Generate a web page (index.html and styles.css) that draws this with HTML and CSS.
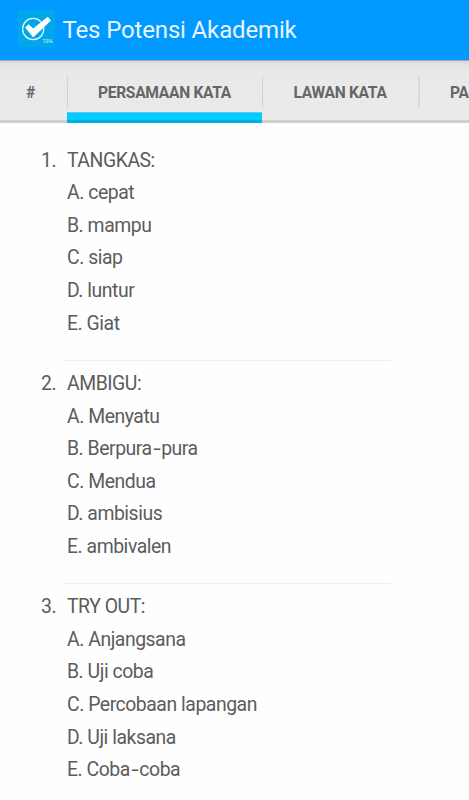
FILE: index.html
```html
<!DOCTYPE html>
<html lang="id">
<head>
<meta charset="utf-8">
<title>Tes Potensi Akademik</title>
<link rel="stylesheet" href="styles.css">
</head>
<body>
<header class="app-bar">
  <svg class="logo" viewBox="0 0 37 37" role="img" aria-label="TPA">
    <rect width="37" height="37" fill="#00a7eb"/>
    <circle cx="15.2" cy="19" r="10.6" fill="none" stroke="#e4f6ff" stroke-width="1.3"/>
    <path d="M7.2 17.6L10.6 14.2L15.2 18.6L29.7 6.8L33 10.4L15.2 27.4Z" fill="#fff" stroke="#00a7eb" stroke-width="1" paint-order="stroke"/>
    <text class="logo-text" x="24.4" y="33" textLength="10.5">TPA</text>
  </svg>
  <h1 class="title">Tes Potensi Akademik</h1>
</header>
<nav class="tabs">
  <div class="tab tab-index"><span>#</span></div>
  <div class="tab tab-active"><span>PERSAMAAN KATA</span></div>
  <div class="tab tab-opposite"><span>LAWAN KATA</span></div>
  <div class="tab tab-next"><span>PA</span></div>
</nav>
<main class="questions">
  <section class="question">
    <div class="number">1.</div>
    <div class="lines"><p>TANGKAS:</p><p>A. cepat</p><p>B. mampu</p><p>C. siap</p><p>D. luntur</p><p>E. Giat</p></div>
  </section>
  <hr class="rule">
  <section class="question">
    <div class="number">2.</div>
    <div class="lines"><p>AMBIGU:</p><p>A. Menyatu</p><p>B. Berpura<span class="hyphen">-</span>pura</p><p>C. Mendua</p><p>D. ambisius</p><p>E. ambivalen</p></div>
  </section>
  <hr class="rule">
  <section class="question">
    <div class="number">3.</div>
    <div class="lines"><p>TRY OUT:</p><p>A. Anjangsana</p><p>B. Uji coba</p><p>C. Percobaan lapangan</p><p>D. Uji laksana</p><p>E. Coba<span class="hyphen">-</span>coba</p></div>
  </section>
</main>
</body>
</html>
```
FILE: styles.css
```css
* { box-sizing: border-box; }
html, body { height: 100%; }
body {
  margin: 0;
  overflow: hidden;
  background: #fefefe;
  color: #5c5c5c;
  font-family: Roboto, sans-serif;
}
.app-bar {
  display: flex;
  align-items: center;
  height: 60px;
  padding: 0 0 3px 18px;
  background: #0099ff;
}
.logo { width: 37px; height: 37px; }
.logo-text { font: 5.6px "Liberation Serif", serif; fill: #d5f1ff; }
.title {
  margin: 2px 0 0 7.5px;
  color: #e8f5ff;
  font-size: 24px;
  font-weight: 400;
  letter-spacing: -0.15px;
  line-height: 32px;
  white-space: nowrap;
}
.tabs {
  display: flex;
  height: 63px;
  overflow: hidden;
  border-top: 1px solid #a9a9a9;
  background: linear-gradient(#d9d9d9, #e5e5e5 5px, #e9e9e9 14px, #eaeaea 59px, #cfcfcf 59px);
}
.tab {
  display: flex;
  flex: none;
  justify-content: center;
  padding-top: 15px;
  color: #666;
  font-size: 15.6px;
  font-weight: 700;
  letter-spacing: -0.3px;
  line-height: 34px;
  white-space: nowrap;
}
.tab-index { width: 67px; padding-right: 6px; }
.tab-active {
  width: 195px;
  background:
    linear-gradient(#d2d2d2, #d2d2d2) left 15px / 1px 32px no-repeat,
    linear-gradient(#5bcdf0 1px, #00ccff 1px, #00ccff 8px, #00b3df 8px) left bottom / 100% 11px no-repeat;
}
.tab-opposite {
  width: 156px;
  background: linear-gradient(#d2d2d2, #d2d2d2) left 15px / 1px 32px no-repeat;
}
.tab-next {
  padding-left: 32px;
  background: linear-gradient(#dadada, #dadada) left 15px / 2px 32px no-repeat;
}
.questions { padding: 21.6px 0 0 41px; }
.question {
  display: grid;
  grid-template-columns: 26px 1fr;
  font-size: 19.4px;
  letter-spacing: -0.46px;
  line-height: 32.6px;
}
.question p { margin: 0; }
.hyphen {
  display: inline-block;
  width: 9.5px;
  transform: scaleX(1.4);
  text-align: center;
}
.rule {
  width: 327px;
  height: 1px;
  margin: 19.4px 0 7.4px 23px;
  border: 0;
  background: #efefef;
}
```
